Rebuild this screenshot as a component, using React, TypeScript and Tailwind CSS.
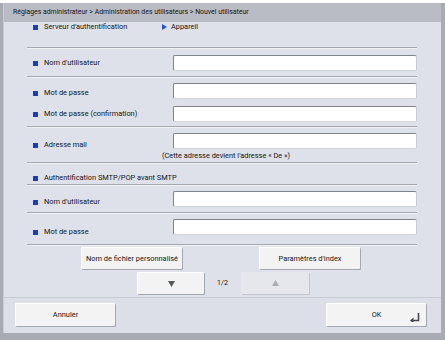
import React from "react";

const font = { fontFamily: 'Roboto, "Noto Sans", sans-serif' };

function Sq() {
  return <span className="inline-block w-[5px] h-[5px] bg-[#1c3bbd] mr-[6px] shrink-0" />;
}

function Label({ text, top }: { text: string; top: number }) {
  return (
    <div className="w-[142px] pl-[2px] flex items-center h-[10px] text-[7.4px] text-[#141414]" style={{ marginTop: top }}>
      <Sq />
      <span className="whitespace-nowrap">{text}</span>
    </div>
  );
}

function Input({ top }: { top: number }) {
  return (
    <div
      className="w-[244px] h-[16px] bg-white rounded-[2px] border border-t-[#7f838b] border-l-[#7f838b] border-r-[#c9ccd3] border-b-[#d3d5dc]"
      style={{ marginTop: top }}
    />
  );
}

function Sep() {
  return <div className="h-[2px] border-t border-[#a4a7b0] bg-[#f0f1f5] ml-[23px] w-[390px]" />;
}

function Btn({ children, className = "" }: { children: React.ReactNode; className?: string }) {
  return (
    <div
      className={
        "flex items-center justify-center bg-[#f3f3f4] text-[7.4px] text-[#141414] rounded-[1px] shadow-[1px_1px_0_#a3a7af] border-t border-l border-[#ffffff] " +
        className
      }
    >
      {children}
    </div>
  );
}

export default function App() {
  return (
    <div className="w-[445px] h-[340px] bg-white overflow-hidden" style={font}>
      <div className="mt-[3px] h-[337px] bg-[#a8abb3] pl-[3px] pr-[4px] pb-[7px] flex flex-col">
        <div className="h-[19px] bg-[#b9bcc4] flex items-center pl-[9px] text-[6.9px] text-[#141414] border-l border-[#c9ccd3]">
          Réglages administrateur &gt; Administration des utilisateurs &gt; Nouvel utilisateur
        </div>
        <div className="flex-1 bg-[#dfe1ea] flex flex-col border-l border-[#c9ccd3]">
          {/* Row A */}
          <div className="h-[25px] flex pl-[27px]">
            <Label text="Serveur d'authentification" top={0} />
            <div className="flex items-center h-[10px] ml-[-11px] text-[7.4px] text-[#141414]">
              <svg width="5" height="6" viewBox="0 0 5 6" className="mr-[4px]">
                <path d="M0 0 L5 3 L0 6 Z" fill="#2b4fc9" />
              </svg>
              Appareil
            </div>
          </div>
          <Sep />
          {/* Row B */}
          <div className="h-[27px] flex pl-[27px]">
            <Label text="Nom d'utilisateur" top={9} />
            <Input top={6} />
          </div>
          <Sep />
          {/* Row C */}
          <div className="h-[22px] flex pl-[27px]">
            <Label text="Mot de passe" top={10} />
            <Input top={5} />
          </div>
          <div className="h-[26px] flex pl-[27px]">
            <Label text="Mot de passe (confirmation)" top={9} />
            <Input top={6} />
          </div>
          <Sep />
          {/* Row D */}
          <div className="h-[34px] flex flex-col pl-[27px]">
            <div className="flex">
              <Label text="Adresse mail" top={12} />
              <Input top={5} />
            </div>
            <div className="w-[390px] text-center text-[7.4px] text-[#141414] h-[10px] leading-[10px] mt-[1px]">
              (Cette adresse devient l'adresse « De »)
            </div>
          </div>
          <Sep />
          {/* Row E */}
          <div className="h-[20px] flex pl-[27px]">
            <Label text="Authentification SMTP/POP avant SMTP" top={9} />
          </div>
          <Sep />
          {/* Row F */}
          <div className="h-[26px] flex pl-[27px]">
            <Label text="Nom d'utilisateur" top={11} />
            <Input top={5} />
          </div>
          <Sep />
          {/* Row G */}
          <div className="h-[30px] flex pl-[27px]">
            <Label text="Mot de passe" top={13} />
            <Input top={5} />
          </div>
          <Sep />
          {/* Buttons area */}
          <div className="h-[51px] flex flex-col">
            <div className="flex mt-[1px]">
              <Btn className="ml-[77px] w-[101px] h-[22px]">Nom de fichier personnalisé</Btn>
              <Btn className="ml-[77px] w-[101px] h-[22px]">Paramètres d'index</Btn>
            </div>
            <div className="flex mt-[3px] items-center">
              <Btn className="ml-[133px] w-[67px] h-[22px]">
                <svg width="7" height="6" viewBox="0 0 7 6">
                  <path d="M0 0 H7 L3.5 6 Z" fill="#55585e" />
                </svg>
              </Btn>
              <div className="w-[37px] text-center text-[7px] text-[#141414]">1/2</div>
              <div className="w-[68px] h-[22px] bg-[#e6e7ec] flex items-center justify-center shadow-[1px_1px_0_#c4c7ce]">
                <svg width="7" height="6" viewBox="0 0 7 6">
                  <path d="M0 6 H7 L3.5 0 Z" fill="#a9acb3" />
                </svg>
              </div>
            </div>
          </div>
          <div className="h-px bg-[#c7cad2]" />
          {/* Bottom bar */}
          <div className="flex-1 flex items-start pt-[5px] bg-[#dcdfe8]">
            <Btn className="ml-[11px] w-[100px] h-[23px]">Annuler</Btn>
            <Btn className="ml-[211px] w-[100px] h-[23px] relative">
              OK
              <svg width="10" height="9" viewBox="0 0 10 9" className="absolute right-[6px] bottom-[4px]">
                <path d="M8.5 0 V7.5 H2" stroke="#44474d" strokeWidth="1.6" fill="none" />
                <path d="M0 7.5 L3.5 4.5 V10.5 Z" fill="#44474d" />
              </svg>
            </Btn>
          </div>
        </div>
      </div>
    </div>
  );
}
